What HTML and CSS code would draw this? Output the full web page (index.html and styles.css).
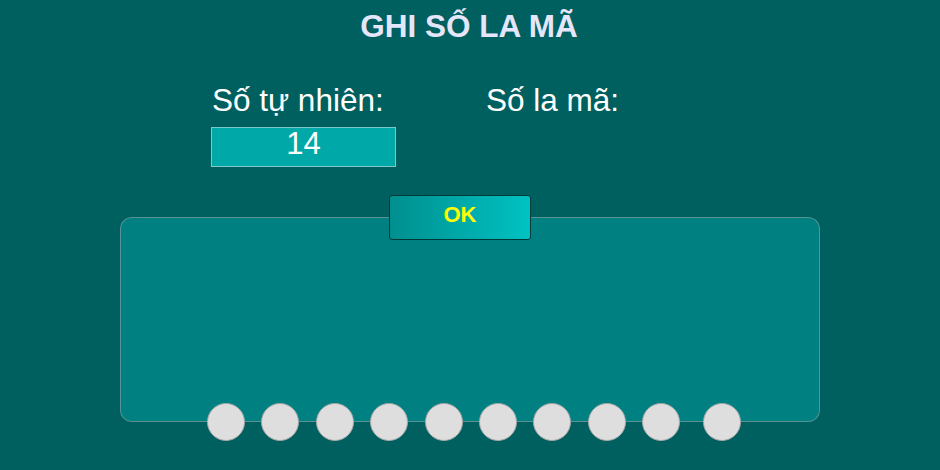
FILE: index.html
```html
<!DOCTYPE html>
<html lang="vi">
<head>
<meta charset="utf-8">
<title>Ghi số La Mã</title>
<link rel="stylesheet" href="styles.css">
</head>
<body>
<div class="page">
  <h1 class="title">GHI SỐ LA MÃ</h1>
  <div class="form">
    <div class="field field-natural">
      <div class="label">Số tự nhiên:</div>
      <div class="num-box">14</div>
    </div>
    <div class="field field-roman">
      <div class="label">Số la mã:</div>
    </div>
  </div>
  <button class="ok-btn" type="button">OK</button>
  <div class="panel"></div>
  <div class="dots">
    <span class="dot"></span>
    <span class="dot"></span>
    <span class="dot"></span>
    <span class="dot"></span>
    <span class="dot"></span>
    <span class="dot"></span>
    <span class="dot"></span>
    <span class="dot"></span>
    <span class="dot"></span>
    <span class="dot dot-last"></span>
  </div>
</div>
</body>
</html>
```

FILE: styles.css
```css
html, body {
  margin: 0;
  padding: 0;
}

body {
  background: #005f5f;
  font-family: "Liberation Sans", Arial, sans-serif;
  color: #ffffff;
}

.page {
  width: 940px;
  height: 470px;
  overflow: hidden;
}

.title {
  margin: 0;
  padding: 11px 2px 0 0;
  font-size: 31.5px;
  line-height: 30px;
  font-weight: bold;
  text-align: center;
  color: #e6e6fa;
}

.form {
  display: flex;
  margin-top: 44px;
  padding-left: 212px;
}

.field-natural {
  width: 274px;
}

.label {
  font-size: 31.5px;
  line-height: 30px;
  color: #ffffff;
}

.num-box {
  box-sizing: border-box;
  width: 185px;
  height: 40px;
  margin: 12px 0 0 -1px;
  padding-top: 1px;
  background: #00a8a8;
  border: 1px solid #7cc8c8;
  font-size: 31px;
  line-height: 30px;
  text-align: center;
  color: #ffffff;
}

.ok-btn {
  position: relative;
  z-index: 1;
  display: block;
  box-sizing: border-box;
  width: 142px;
  height: 45px;
  margin: 28px 0 0 389px;
  padding: 0 0 6px 0;
  border: 1px solid #003838;
  border-radius: 3px;
  background: linear-gradient(to right, #008f8f, #00c2c2);
  font-family: "Liberation Sans", Arial, sans-serif;
  font-size: 22px;
  line-height: 22px;
  font-weight: bold;
  color: #ffff00;
  text-align: center;
}

.panel {
  box-sizing: border-box;
  width: 700px;
  height: 205px;
  margin: -23px 0 0 120px;
  background: #008080;
  border: 1px solid rgba(160, 160, 160, 0.55);
  border-radius: 12px;
}

.dots {
  display: flex;
  gap: 16.4px;
  margin: -19px 0 0 207px;
}

.dot {
  box-sizing: border-box;
  width: 38px;
  height: 38px;
  border-radius: 50%;
  background: #dedede;
  border: 1px solid #a8a8a8;
}

.dot-last {
  margin-left: 6px;
}
```
